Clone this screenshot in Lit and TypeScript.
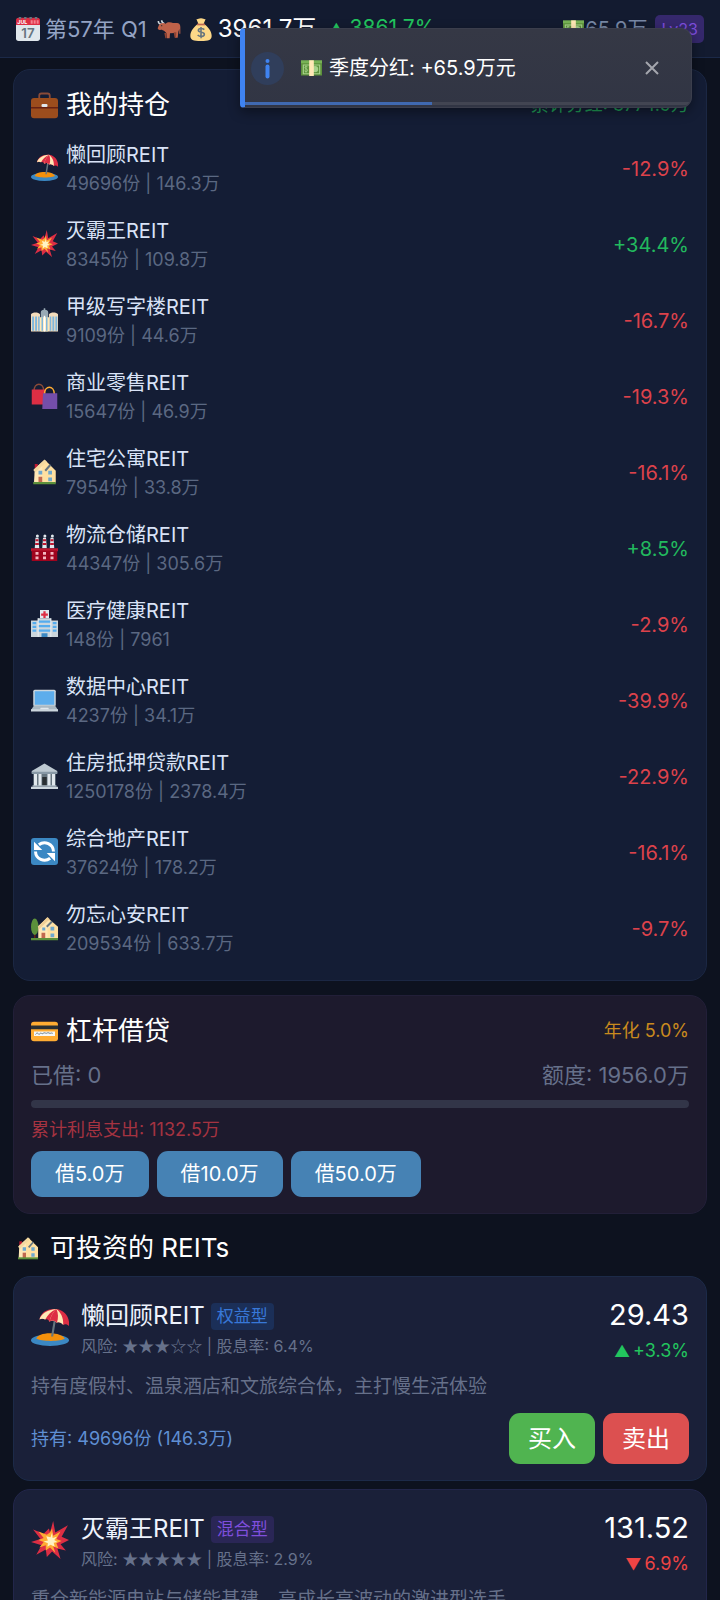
import { LitElement, html, css, svg, nothing, TemplateResult } from "lit";
import { customElement, property, state } from "lit/decorators.js";

/* ---------- pictograms, all on a 36-unit grid ---------- */

const house = svg`
  <path d="M5 14 L18 3 L18 33 H4 Z" fill="#ffe8b6"/>
  <path d="M15 8 L19 3 L33 17 V33 H15 Z" fill="#ffe0a0"/>
  <path d="M5 8h4v6h-4z" fill="#be1931"/>
  <path d="M3 16 L18 2 L21 5 L6 19z" fill="#f4d9a0"/>
  <path d="M19 17 L26 9" stroke="#66757f" stroke-width="2.6"/>
  <path d="M10 17h5v5h-5zM23 17h5v5h-5zM23 26h5v5h-5z" fill="#6fa9cf"/>
  <path d="M10 25h5v8h-5z" fill="#c1694f"/>
  <path d="M3 32h30v3H3z" fill="#5c913b"/>`;

const glyphs: Record<string, TemplateResult<2>> = {
  calendar: svg`
    <path d="M0 8h36v24a4 4 0 0 1-4 4H4a4 4 0 0 1-4-4z" fill="#e0e7ec"/>
    <path d="M0 12V5a4 4 0 0 1 4-4h28a4 4 0 0 1 4 4v7z" fill="#dd2e44"/>
    <circle cx="6" cy="1.5" r="2" fill="#66757f"/><circle cx="14" cy="1.5" r="2" fill="#66757f"/>
    <circle cx="22" cy="1.5" r="2" fill="#66757f"/><circle cx="30" cy="1.5" r="2" fill="#66757f"/>
    <text x="2" y="10.5" font-size="8" font-weight="700" fill="#fff">JUL</text>
    <path d="M22 5h3v5h-3zM26.500 5h3v5h-3zM31 5h3v5h-3z" fill="#f4808f"/>
    <text x="18" y="31" font-size="20" font-weight="600" text-anchor="middle" fill="#66757f">17</text>`,
  ox: svg`
    <path d="M2 6c0 3 2 5 5 5l3-1M7 5c0 2 1 4 4 5" fill="none" stroke="#ccd6dd" stroke-width="2.400"/>
    <path d="M3 12c2-3 7-4 10-2 3-3 8-2 11-1h6c3 0 5 2 5 6v10l-1.500 0v-7l-1.500 4-1 9h-4l-.5-7-7 .5-.5 7.500h-4l-1-8-3-3c-2-1-3-2-5-2-3 1-4 0-5-2z" fill="#bf6249"/>
    <path d="M11 24l1.500 8h2v-8zM25 23l1.500 8h2l.5-8z" fill="#8f4434"/>
    <circle cx="7" cy="13" r="1" fill="#292f33"/>`,
  moneybag: svg`
    <path d="M11 3c2 1 3-1 7-1s5 2 7 1l-3 7c6 4 12 11 12 18 0 6-4 8-16 8S2 34 2 28C2 21 8 14 14 10z" fill="#fdd888"/>
    <path d="M12 10h12v2.500H12z" fill="#bf6952"/>
    <path d="M23 19c-2-2-9-3-9 1s9 2 9 6-7 4-10 1M18 15v17" fill="none" stroke="#67757f" stroke-width="2.400"/>`,
  cash: svg`
    <path d="M0 6h36v24H0z" fill="#5c913b"/><path d="M0 4h36v5H0z" fill="#77b255"/>
    <path d="M3 11h30v17H3z" fill="#a7d28b"/><path d="M5 13h26v13H5z" fill="#5c913b"/>
    <circle cx="24" cy="19" r="5.500" fill="#a7d28b"/>
    <path d="M11 15c-3-1-5 0-4 2s4 1 4 4-3 3-5 1M8.500 13v12" fill="none" stroke="#a7d28b" stroke-width="1.500"/>
    <path d="M14 4h8v27h-8z" fill="#ffe8b6"/>`,
  briefcase: svg`
    <path d="M11 10V5a3 3 0 0 1 3-3h8a3 3 0 0 1 3 3v5" fill="none" stroke="#8a4b38" stroke-width="2.400"/>
    <rect y="8" width="36" height="27" rx="4" fill="#9c4d1d"/>
    <path d="M0 20h36v2H0z" fill="#662113"/><rect x="14" y="16" width="8" height="4" rx="1.500" fill="#e1e8ed"/>`,
  beach: svg`
    <ellipse cx="18" cy="30.500" rx="18" ry="5.500" fill="#3b88c3"/>
    <path d="M5 29c1-3 6-5 13-5s12 2 14 5c-3 3-23 3-27 0z" fill="#f4900c"/>
    <path d="M23 3l2 0-4 24h-2z" fill="#66757f"/>
    <path d="M8 11C9 4 16 0 24 1c8 1 13 8 12 16-2-2-4-2-5.500-1-1-2-4-3-6-2-2-2-5-3-7-1-1-2-2-3-4-2-2-1-4-1-5.500 0z" fill="#dd2e44"/>
    <path d="M8 11C9.500 6 15 1.500 24 1c-5 2-8.500 6-10.500 10-2-1-4-1-5.500 0zM24 1c-3 3-5.500 7-6.500 12 2-2 5-1 7 1 2-1 4 0 6 2C31 9 28 4 24 1z" fill="#ffe8b6"/>
    <path d="M24 1c-3 3-5.500 7-6.500 12 2-2 5-1 7 1 1.500-4 1.500-9-.5-13z" fill="#dd2e44"/>`,
  burst: svg`
    <path d="M21 0l2 11L35 4l-6 11 7 3-8 4 5 6-8-2 3 10-8-7-5 5-1-7-9 5 5-9-10-3 9-3L2 8l10 4 5-5 1 4z" fill="#dd2e44"/>
    <path d="M20 7l1 7 7-4-4 7 5 2-5 2 2 5-5-2 2 6-5-5-4 3v-5l-6 2 4-5-5-2 5-2-5-6 8 3 3-2z" fill="#ffac33"/>
    <path d="M20 11l.5 5 4-1-2.500 3 3 2-3.500.5 1 4-4-2-3 2 .5-3.500-4-1.500 4-1-1.500-4 4 1z" fill="#fff3c4"/>`,
  office: svg`
    <path d="M13 9c0-3 2-4 4-4V3h2v2c2 0 4 1 4 4v25H13z" fill="#99aab5"/>
    <path d="M0 11c2-3 10-3 12 0v23H0zM24 11c2-3 10-3 12 0v23H24z" fill="#f3dcbc"/>
    <path d="M12 15h12v19H12z" fill="#ffe8b6"/>
    <path d="M1.500 14H4v19H1.500zM5.500 14H8v19H5.500zM9.500 14h2v19h-2zM14 15h2v18h-2zM20 15h2v18h-2zM25 14h2v19h-2zM28.500 14H31v19h-2.500zM32.500 14H35v19h-2.500z" fill="#7fb7dc"/>
    <path d="M17 13h2v21h-2z" fill="#fff"/>`,
  bags: svg`
    <path d="M4 12c0-12 13-12 13 0" fill="none" stroke="#8a4b38" stroke-width="2"/>
    <path d="M1 10h18v20H1z" fill="#dd2e44"/>
    <path d="M18 16c0-12 13-12 13 0" fill="none" stroke="#ffac33" stroke-width="2"/>
    <path d="M16 15h19v21H15z" fill="#744eaa"/>`,
  house,
  garden: svg`
    <path d="M4 22h2v12H4z" fill="#662113"/><ellipse cx="5" cy="17" rx="5" ry="11" fill="#5c913b"/>
    <path d="M10 16 L22 5 L36 17 V33 H10z" fill="#ffe0a0"/><path d="M10 16l11-10 8 9-7 4v14H10z" fill="#ffe8b6"/>
    <path d="M9 17L22 4l3 3-14 13z" fill="#f0cf96"/><path d="M21 17l7-7" stroke="#66757f" stroke-width="2.600"/>
    <path d="M15 18h4v4h-4zM26 17h5v5h-5zM26 26h5v5h-5z" fill="#6fa9cf"/><path d="M14 25h5v8h-5z" fill="#c1694f"/>
    <path d="M0 32h36v3H0z" fill="#5c913b"/>`,
  factory: svg`
    <path d="M6 5h4l1 14H5zM16 5h4l1 14h-6zM26 5h4l1 14h-6z" fill="#e1e8ed"/>
    <path d="M6 7h4v2.500H6zM5.500 12h5v2.500h-5zM16 7h4v2.500h-4zM15.500 12h5v2.500h-5zM26 7h4v2.500h-4zM25.500 12h5v2.500h-5z" fill="#be1931"/>
    <circle cx="8.500" cy="2.500" r="2" fill="#e1e8ed"/><circle cx="18.500" cy="2.500" r="2" fill="#e1e8ed"/><circle cx="28.500" cy="2.500" r="2" fill="#e1e8ed"/>
    <path d="M0 19h36v4H0z" fill="#be1931"/><path d="M1 22h34v14H1z" fill="#a0041e"/>
    <path d="M6 24h4v3.500H6zM16 24h4v3.500h-4zM26 24h4v3.500h-4zM6 30h4v3.500H6zM16 30h4v3.500h-4zM26 30h4v3.500h-4z" fill="#f4b6c0"/>`,
  hospital: svg`
    <path d="M0 14h9v-3h18v3h9v22H0z" fill="#ccd6dd"/><path d="M12 0h12v11H12z" fill="#e1e8ed"/>
    <path d="M16.500 1.500h3v3h3v3h-3v3h-3v-3h-3v-3h3z" fill="#dd2e44"/>
    <path d="M2 16h5v3H2zM2 21h5v3H2zM2 26h5v3H2zM29 16h5v3h-5zM29 21h5v3h-5zM29 26h5v3h-5zM10 14h16v3H10zM10 20h16v3H10zM10 26h16v3H10z" fill="#55acee"/>
    <path d="M9 11h1v25H9zM26 11h1v25h-1z" fill="#f5f8fa"/><path d="M14 31h8v5h-8z" fill="#3b88c3"/>`,
  laptop: svg`
    <rect x="3" y="5" width="30" height="22" rx="2" fill="#ccd6dd"/><path d="M5 7h26v18H5z" fill="#5dadec"/>
    <path d="M4 26h28l4 6H0z" fill="#aab8c2"/><path d="M0 31h36v3H0z" fill="#ccd6dd"/><path d="M13 29h10l1 2H12z" fill="#e1e8ed"/>`,
  bank: svg`
    <path d="M18 2l17 10v3H1v-3z" fill="#bdc9d1"/><path d="M1 13h34v3H1z" fill="#8899a6"/>
    <path d="M3 16h30v16H3z" fill="#66757f"/><path d="M4 16h4v16H4zM10 16h4v16h-4zM22 16h4v16h-4zM28 16h4v16h-4z" fill="#e1e8ed"/>
    <path d="M15 20h6v12h-6z" fill="#292f33"/><path d="M2 31h32v2H2z" fill="#aab8c2"/><path d="M0 33h36v3H0z" fill="#ccd6dd"/>`,
  refresh: svg`
    <rect width="36" height="36" rx="4" fill="#3b88c3"/>
    <path d="M10.500 9a12 12 0 0 1 19.500 9M25.500 27a12 12 0 0 1-19.500-9" fill="none" stroke="#fff" stroke-width="4"/>
    <path d="M4 5v11h11zM32 31V20H21z" fill="#fff"/>`,
  credit: svg`
    <rect y="5" width="36" height="26" rx="4" fill="#ffac33"/><path d="M0 10h36v5H0z" fill="#292f33"/>
    <path d="M4 18h28v6H4z" fill="#f5f8fa"/>
    <path d="M6 22c2-3 3-2 4-.5s3-3 4-1 3-2 5-.5 3-1.500 5 0 3-1 5 .5" fill="none" stroke="#66757f" stroke-width="1.200"/>`,
};

@customElement("emoji-icon")
class EmojiIcon extends LitElement {
  static styles = css`
    :host { display: inline-flex; flex: none; width: 27px; height: 27px; }
    .art { width: 100%; height: 100%; display: block; font-family: Inter, sans-serif; }
  `;
  @property() name = "house";
  render() {
    return html`<svg class="art" viewBox="0 0 36 36" aria-hidden="true">${glyphs[this.name]}</svg>`;
  }
}

/* ---------- data ---------- */

interface Holding { icon: string; name: string; shares: string; value: string; change: string; }

const holdings: Holding[] = [
  { icon: "beach", name: "懒回顾REIT", shares: "49696份", value: "146.3万", change: "-12.9%" },
  { icon: "burst", name: "灭霸王REIT", shares: "8345份", value: "109.8万", change: "+34.4%" },
  { icon: "office", name: "甲级写字楼REIT", shares: "9109份", value: "44.6万", change: "-16.7%" },
  { icon: "bags", name: "商业零售REIT", shares: "15647份", value: "46.9万", change: "-19.3%" },
  { icon: "house", name: "住宅公寓REIT", shares: "7954份", value: "33.8万", change: "-16.1%" },
  { icon: "factory", name: "物流仓储REIT", shares: "44347份", value: "305.6万", change: "+8.5%" },
  { icon: "hospital", name: "医疗健康REIT", shares: "148份", value: "7961", change: "-2.9%" },
  { icon: "laptop", name: "数据中心REIT", shares: "4237份", value: "34.1万", change: "-39.9%" },
  { icon: "bank", name: "住房抵押贷款REIT", shares: "1250178份", value: "2378.4万", change: "-22.9%" },
  { icon: "refresh", name: "综合地产REIT", shares: "37624份", value: "178.2万", change: "-16.1%" },
  { icon: "garden", name: "勿忘心安REIT", shares: "209534份", value: "633.7万", change: "-9.7%" },
];

interface Listing {
  icon: string; name: string; kind: "equity" | "mixed"; tag: string; risk: number;
  dividend: string; price: string; up: boolean; change: string; about: string; held: string;
}

const listings: Listing[] = [
  { icon: "beach", name: "懒回顾REIT", kind: "equity", tag: "权益型", risk: 3, dividend: "6.4%", price: "29.43",
    up: true, change: "+3.3%", about: "持有度假村、温泉酒店和文旅综合体，主打慢生活体验", held: "49696份 (146.3万)" },
  { icon: "burst", name: "灭霸王REIT", kind: "mixed", tag: "混合型", risk: 5, dividend: "2.9%", price: "131.52",
    up: false, change: "6.9%", about: "重仓新能源电站与储能基建，高成长高波动的激进型选手", held: "8345份 (109.8万)" },
];

const loans = ["借5.0万", "借10.0万", "借50.0万"];

/* ---------- application ---------- */

@customElement("app-root")
class AppRoot extends LitElement {
  static styles = css`
    :host {
      display: flex; flex-direction: column; height: 100vh; position: relative; overflow: hidden;
      background: #0d121f; color: #fff;
      font-family: Inter, "Noto Sans CJK SC", sans-serif; font-size: 18px; line-height: 28px;
    }
    * { box-sizing: border-box; }
    h2, p, ul { margin: 0; padding: 0; }
    ul { list-style: none; }
    button { font: inherit; color: #fff; border: 0; margin: 0; cursor: pointer; }

    .topbar {
      flex: none; display: flex; align-items: center; justify-content: space-between;
      height: 58px; padding: 0 16px; background: #131b30; border-bottom: 1px solid #1b2948; font-size: 22px;
    }
    .group { display: flex; align-items: center; gap: 8px; white-space: nowrap; }
    .small { width: 24px; height: 24px; }
    .term { color: #94a3c4; margin-right: 2px; }
    .term-group { display: flex; align-items: center; gap: 5px; }
    .worth { font-size: 24px; }
    .gain { font-size: 21px; color: #22c55e; margin-left: 4px; }
    .gain .mark { margin-right: 5px; }
    .mark { font-size: 16px; margin-right: 3px; }
    .cash { display: flex; align-items: center; gap: 1px; font-size: 20px; color: #7787a4; }
    .note { width: 21px; height: 21px; }
    .level { font-size: 16px; line-height: 28px; padding: 0 6px; border-radius: 5px; background: #35286c; color: #7c4ddb; }

    .scroll { flex: 1; min-height: 0; overflow-y: auto; scrollbar-width: none; padding: 11px 13px 13px; display: flex; flex-direction: column; gap: 14px; }
    .panel { flex: none; padding: 16px 17px; border: 1px solid #1b2743; border-radius: 17px; background: #141d35; }
    .panel.portfolio { padding-bottom: 12px; }
    .panel.debt { background: #1d1a2d; border-color: #221f38; }
    .head { display: flex; align-items: center; justify-content: space-between; }
    .title { display: flex; align-items: center; gap: 8px; font-size: 26px; line-height: 38px; font-weight: 400; }
    .total { color: #1f9a55; }
    .rate { color: #c98a1e; }

    .rows { padding-top: 8px; }
    .row { display: flex; align-items: center; gap: 8px; padding: 8px 0 10px; }
    .row-icon { margin-bottom: 4px; }
    .row-text { flex: 1; min-width: 0; }
    .name { font-size: 20px; line-height: 30px; color: #d9e3f7; }
    .detail { color: #5b6882; }
    .pct { font-size: 20px; }
    .up { color: #22c55e; }
    .down { color: #ef4444; }
    .row .up { color: #22b95e; }
    .row .down { color: #dc424b; }

    .credit-line { display: flex; justify-content: space-between; margin-top: 8px; font-size: 22px; line-height: 34px; color: #66708a; }
    .meter { height: 8px; margin-top: 8px; border-radius: 4px; background: #323548; overflow: hidden; }
    .fill { height: 100%; background: #d97706; }
    .interest { margin-top: 8px; line-height: 27px; color: #a53341; }
    .loan-buttons { display: flex; gap: 8px; margin-top: 8px; }
    .loan { height: 46px; padding: 0 24px; border-radius: 11px; background: #4682b4; font-size: 20px; }

    .market { display: flex; flex-direction: column; gap: 8px; }
    .section-title { display: flex; align-items: center; gap: 10px; padding-left: 3px; font-size: 26px; line-height: 40px; font-weight: 400; }
    .listing { background: #1a2039; border-color: #1c2a48; }
    .listing.mixed { border-color: #22264a; }
    .summary { display: flex; align-items: center; gap: 12px; }
    .large { width: 38px; height: 38px; margin-bottom: 4px; }
    .facts { flex: 1; min-width: 0; align-self: flex-start; padding-top: 5px; }
    .name-line { display: flex; align-items: center; gap: 6px; font-size: 24px; line-height: 36px; color: #eef3fd; }
    .tag { font-size: 17px; line-height: 27px; padding: 0 6px; border-radius: 4px; }
    .tag.equity { background: #1b2f58; color: #3878d8; }
    .tag.mixed { background: #2a2656; color: #7f4fdd; }
    .risk { font-size: 16px; line-height: 22px; color: #66718b; }
    .stars { font-family: "Noto Sans CJK SC", sans-serif; }
    .quote { text-align: right; }
    .price { font-size: 29px; line-height: 44px; }
    .move { line-height: 28px; }
    .about { margin-top: 8px; font-size: 19px; color: #66708a; }
    .trade { display: flex; align-items: center; gap: 8px; margin-top: 12px; }
    .held { flex: 1; color: #5f8fd3; }
    .order { height: 51px; padding: 0 19px; border-radius: 11px; font-size: 24px; }
    .buy { background: #50b450; }
    .sell { background: #dc5050; }

    .toast {
      position: absolute; top: 28px; right: 28px; width: 452px; height: 80px; overflow: hidden;
      display: flex; align-items: center; padding: 0 27px 0 6px;
      border: solid #3b3e4c; border-width: 1px 1px 1px 0; border-left: 5px solid #3f83f1; border-radius: 4px 11px 11px 4px;
      background: linear-gradient(#353845, #313544); box-shadow: 0 4px 12px #0006; font-size: 20px;
    }
    .info { flex: none; display: block; width: 33px; height: 33px; }
    .message { flex: 1; display: flex; align-items: center; gap: 7px; margin-left: 17px; }
    .close { display: flex; padding: 5px; background: none; }
    .cross { width: 14px; height: 14px; display: block; }
    .timer { position: absolute; left: 0; right: 0; bottom: 2px; height: 3px; background: #424552; }
    .elapsed { height: 100%; background: #4069b0; }
  `;

  @state() private toastOpen = true;

  private row(h: Holding) {
    return html`<li class="row">
      <emoji-icon class="row-icon" name=${h.icon}></emoji-icon>
      <div class="row-text">
        <p class="name">${h.name}</p>
        <p class="detail">${h.shares} | ${h.value}</p>
      </div>
      <span class="pct ${h.change.startsWith("-") ? "down" : "up"}">${h.change}</span>
    </li>`;
  }

  private listing(l: Listing) {
    return html`<article class="panel listing ${l.kind}">
      <div class="summary">
        <emoji-icon class="large" name=${l.icon}></emoji-icon>
        <div class="facts">
          <div class="name-line">${l.name}<span class="tag ${l.kind}">${l.tag}</span></div>
          <p class="risk">风险: <span class="stars">${"★".repeat(l.risk)}${"☆".repeat(5 - l.risk)}</span> | 股息率: ${l.dividend}</p>
        </div>
        <div class="quote">
          <p class="price">${l.price}</p>
          <p class="move ${l.up ? "up" : "down"}"><span class="mark">${l.up ? "▲" : "▼"}</span>${l.change}</p>
        </div>
      </div>
      <p class="about">${l.about}</p>
      <div class="trade">
        <span class="held">持有: ${l.held}</span>
        <button class="order buy">买入</button>
        <button class="order sell">卖出</button>
      </div>
    </article>`;
  }

  private toast() {
    if (!this.toastOpen) return nothing;
    return html`<div class="toast" role="status">
      <svg class="info" viewBox="0 0 33 33" aria-hidden="true">
        <circle cx="16.500" cy="16.500" r="16.500" fill="#303e5b"/>
        <circle cx="16.500" cy="9" r="2" fill="#3f83f1"/>
        <path d="M16.500 14.500v10" stroke="#3f83f1" stroke-width="4" stroke-linecap="round"/>
      </svg>
      <span class="message"><emoji-icon class="note" name="cash"></emoji-icon>季度分红: +65.9万元</span>
      <button class="close" aria-label="关闭" @click=${() => (this.toastOpen = false)}>
        <svg class="cross" viewBox="0 0 14 14"><path d="M1 1l12 12M13 1L1 13" stroke="#a4a6ad" stroke-width="2"/></svg>
      </button>
      <div class="timer"><div class="elapsed" style="width:42%"></div></div>
    </div>`;
  }

  render() {
    return html`
      <header class="topbar">
        <div class="group">
          <div class="term-group"><emoji-icon class="small" name="calendar"></emoji-icon><span class="term">第57年 Q1</span></div>
          <emoji-icon class="small" name="ox"></emoji-icon>
          <div class="term-group"><emoji-icon class="small" name="moneybag"></emoji-icon><span class="worth">3961.7万</span></div>
          <span class="gain"><span class="mark">▲</span>3861.7%</span>
        </div>
        <div class="group">
          <span class="cash"><emoji-icon class="note" name="cash"></emoji-icon>65.9万</span>
          <span class="level">Lv23</span>
        </div>
      </header>
      <main class="scroll">
        <section class="panel portfolio">
          <div class="head">
            <h2 class="title"><emoji-icon name="briefcase"></emoji-icon>我的持仓</h2>
            <span class="total">累计分红: 3774.9万</span>
          </div>
          <ul class="rows">${holdings.map((h) => this.row(h))}</ul>
        </section>
        <section class="panel debt">
          <div class="head">
            <h2 class="title"><emoji-icon name="credit"></emoji-icon>杠杆借贷</h2>
            <span class="rate">年化 5.0%</span>
          </div>
          <div class="credit-line"><span>已借: 0</span><span>额度: 1956.0万</span></div>
          <div class="meter"><div class="fill" style="width:0%"></div></div>
          <p class="interest">累计利息支出: 1132.5万</p>
          <div class="loan-buttons">${loans.map((t) => html`<button class="loan">${t}</button>`)}</div>
        </section>
        <section class="market">
          <h2 class="section-title"><emoji-icon class="small" name="house"></emoji-icon>可投资的 REITs</h2>
          ${listings.map((l) => this.listing(l))}
        </section>
      </main>
      ${this.toast()}
    `;
  }
}
